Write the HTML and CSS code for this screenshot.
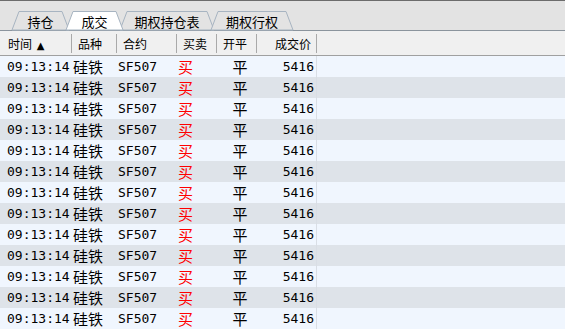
FILE: index.html
```html
<!DOCTYPE html>
<html lang="zh-CN">
<head>
    <meta charset="UTF-8">
    <title>成交</title>
    <link rel="stylesheet" href="styles.css">
</head>
<body>

    <!-- Onglets -->
    <div class="tabbar">
        <div class="tab">
            <svg class="tab-bg" viewBox="0 0 57 19" preserveAspectRatio="none"><path d="M0 19 L7 0.5 H50 L57 19 Z"/></svg>
            <span>持仓</span>
        </div>
        <div class="tab active">
            <svg class="tab-bg" viewBox="0 0 57 19" preserveAspectRatio="none"><path d="M0 19 L7 0.5 H50 L57 19 Z"/></svg>
            <span>成交</span>
        </div>
        <div class="tab wide">
            <svg class="tab-bg" viewBox="0 0 94 19" preserveAspectRatio="none"><path d="M0 19 L7 0.5 H87 L94 19 Z"/></svg>
            <span>期权持仓表</span>
        </div>
        <div class="tab mid">
            <svg class="tab-bg" viewBox="0 0 82 19" preserveAspectRatio="none"><path d="M0 19 L7 0.5 H75 L82 19 Z"/></svg>
            <span>期权行权</span>
        </div>
    </div>

    <!-- En-tête du tableau -->
    <div class="grid head">
        <div class="th">时间 <span class="sort">▲</span></div>
        <div class="th">品种</div>
        <div class="th">合约</div>
        <div class="th">买卖</div>
        <div class="th">开平</div>
        <div class="th right">成交价</div>
        <div class="filler"></div>
    </div>

    <div class="rows" id="rows"></div>

    <script>
        const rows = document.getElementById("rows");
        for (let i = 0; i < 13; i++) {
            const row = document.createElement("div");
            row.className = "grid row";
            row.innerHTML =
                '<div class="td time">09:13:14</div>' +
                '<div class="td cn">硅铁</div>' +
                '<div class="td code">SF507</div>' +
                '<div class="td cn buy">买</div>' +
                '<div class="td cn center">平</div>' +
                '<div class="td code price">5416</div>' +
                '<div class="filler"></div>';
            rows.appendChild(row);
        }
    </script>

</body>
</html>
```

FILE: styles.css
```css
body {
    margin: 0;
    width: 565px;
    height: 329px;
    overflow: hidden;
    background-color: #eef5fe;
    font-family: "Noto Sans CJK SC", sans-serif;
    color: #000;
}

/* Onglets */
.tabbar {
    display: flex;
    align-items: flex-end;
    height: 29px;
    padding-left: 12px;
    background-color: #e3e3e3;
    border-top: 1px solid #6c6c6c;
    border-bottom: 1px solid #8b949d;
}

.tab {
    position: relative;
    width: 57px;
    height: 19px;
    margin-right: -3px;
    display: flex;
    justify-content: center;
    align-items: center;
    font-size: 13px;
    line-height: 19px;
}

.tab.wide { width: 94px; }
.tab.mid { width: 82px; }

.tab-bg {
    position: absolute;
    left: 0;
    top: 0;
    width: 100%;
    height: 100%;
    overflow: visible;
}

.tab-bg path {
    fill: #e3e3e3;
    stroke: #a7b4c1;
    stroke-width: 1;
    vector-effect: non-scaling-stroke;
}

.tab span {
    position: relative;
    padding-top: 2px;
}

.tab.active { z-index: 2; }
.tab.active .tab-bg path { fill: #fff; }

/* Tableau */
.grid {
    display: grid;
    grid-template-columns: 72px 45px 60px 40px 40px 60px 1fr;
}

.head {
    height: 24px;
    background-color: #f0f0f0;
    border-bottom: 1px solid #a0a0a0;
    align-items: center;
}

.th {
    height: 19px;
    border-right: 1px solid #a9a9a9;
    font-size: 12px;
    line-height: 19px;
    padding-left: 6px;
    white-space: nowrap;
}

.th:first-child { padding-left: 8px; }

.th.right {
    text-align: right;
    padding: 0 5px 0 0;
}

.sort {
    font-size: 10px;
    margin-left: 2px;
    font-family: "DejaVu Sans", sans-serif;
}

.row {
    height: 21px;
    background-color: #f0f6fe;
}

.row:nth-child(even) {
    background-color: #dee3e9;
}

.td {
    line-height: 21px;
    white-space: nowrap;
    overflow: visible;
}

.time {
    font-family: "DejaVu Sans Mono", monospace;
    font-size: 13px;
    padding-left: 7px;
}

.code {
    font-family: "DejaVu Sans Mono", monospace;
    font-size: 13px;
    padding-left: 1px;
}

.cn {
    font-size: 15px;
    padding-left: 1px;
}

.buy {
    color: #ff0000;
}

.center {
    text-align: center;
    padding-left: 6px;
}

.price {
    text-align: right;
    padding-right: 2px;
    border-right: 1px solid #d9dee5;
}
```
